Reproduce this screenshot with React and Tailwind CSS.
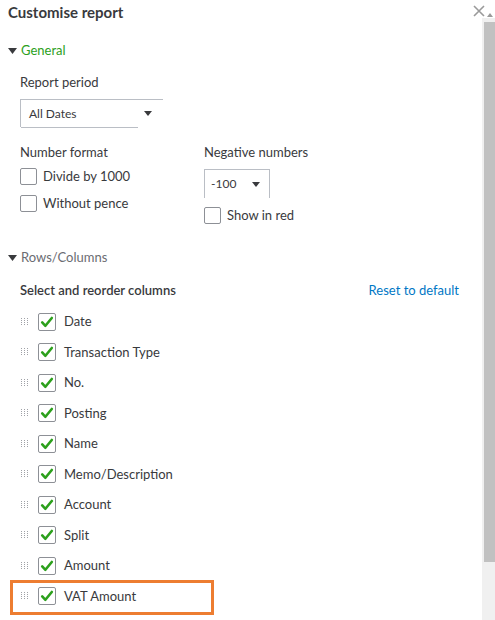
import React from "react";

const Caret = ({ className = "" }) => (
  <svg width="9" height="6" viewBox="0 0 9 6" className={className}>
    <path d="M0 0 L9 0 L4.5 6 Z" fill="#393a3d" />
  </svg>
);

const SmallCaret = () => (
  <svg width="8" height="5" viewBox="0 0 8 5">
    <path d="M0 0 L8 0 L4 5 Z" fill="#393a3d" />
  </svg>
);

const Box = () => (
  <span className="w-[17px] h-[17px] border border-[#8d9096] rounded-[2px] bg-white shrink-0" />
);

const CheckedBox = () => (
  <span className="w-[18px] h-[18px] border border-[#8d9096] rounded-[2px] bg-white shrink-0 flex items-center justify-center">
    <svg width="14" height="14" viewBox="0 0 14 14">
      <path d="M2.2 7.4 L5.4 10.8 L11.8 3" stroke="#2ca01c" strokeWidth="2.6" fill="none" strokeLinecap="round" strokeLinejoin="round" />
    </svg>
  </span>
);

const Grip = () => (
  <svg width="8" height="8" viewBox="0 0 8 8" className="shrink-0">
    {[0, 3, 6].map((x) =>
      [0, 2, 4, 6].map((y) => (
        <rect key={`${x}-${y}`} x={x} y={y} width="1" height="1" fill="#9fa1a6" />
      ))
    )}
  </svg>
);

const columns = [
  "Date",
  "Transaction Type",
  "No.",
  "Posting",
  "Name",
  "Memo/Description",
  "Account",
  "Split",
  "Amount",
  "VAT Amount",
];

function App() {
  return (
    <div
      className="w-[495px] h-[620px] bg-white relative overflow-hidden flex text-[#393a3d]"
      style={{ fontFamily: "Lato, 'Open Sans', sans-serif" }}
    >
      {/* Main panel */}
      <div className="flex-1 flex flex-col">
        <h1 className="ml-[8px] mt-[2px] h-5 leading-5 text-[15px] font-bold text-[#393a3d]">
          Customise report
        </h1>

        {/* General section */}
        <div className="mt-[19px] flex items-center h-5 pl-[8px]">
          <Caret />
          <span className="ml-[4px] text-[13px] text-[#2ca01c]">General</span>
        </div>

        <div className="ml-[20px] mt-[11px] h-5 leading-5 text-[13px]">Report period</div>
        <div className="ml-[20px] mt-[7px] relative w-[143px] h-[28px] border-l border-t border-[#babec5]">
          <div className="absolute left-0 -bottom-px w-[117px] border-b border-[#babec5]" />
          <div className="flex items-center h-full pl-[8px] pr-[11px] justify-between">
            <span className="text-[12px]">All Dates</span>
            <SmallCaret />
          </div>
        </div>

        <div className="ml-[20px] mt-[15px] flex">
          <div className="w-[184px] flex flex-col">
            <div className="h-5 leading-5 text-[13px]">Number format</div>
            <div className="mt-[5px] flex items-center gap-[6px]">
              <Box />
              <span className="text-[13px] text-[#393a3d]">Divide by 1000</span>
            </div>
            <div className="mt-[7px] flex items-center gap-[6px]">
              <Box />
              <span className="text-[13px]">Without pence</span>
            </div>
          </div>
          <div className="flex flex-col">
            <div className="h-5 leading-5 text-[13px]">Negative numbers</div>
            <div className="mt-[7px] w-[66px] h-[29px] border border-[#babec5] border-b-0 flex items-center justify-between pl-[6px] pr-[9px]">
              <span className="text-[12px]">-100</span>
              <SmallCaret />
            </div>
            <div className="mt-[8px] flex items-center gap-[6px]">
              <Box />
              <span className="text-[13px]">Show in red</span>
            </div>
          </div>
        </div>

        {/* Rows/Columns section */}
        <div className="mt-[22px] flex items-center h-5 pl-[8px]">
          <Caret />
          <span className="ml-[4px] text-[13px] text-[#6b6c72]">Rows/Columns</span>
        </div>

        <div className="ml-[20px] mr-[23px] mt-[13px] h-5 flex items-center justify-between">
          <span className="text-[13px] font-semibold">Select and reorder columns</span>
          <span className="text-[13px] text-[#0077c5]">Reset to default</span>
        </div>

        <div className="mt-[6px] flex flex-col">
          {columns.map((c, i) => (
            <div key={c} className="relative h-[30.5px] flex items-center pl-[21px]">
              {i === columns.length - 1 && (
                <span className="absolute left-[10px] top-[-1px] w-[204px] h-[35px] border-[3px] border-[#ed7d31]" />
              )}
              <Grip />
              <span className="ml-[9px]">
                <CheckedBox />
              </span>
              <span className="ml-[8px] text-[13px]">{c}</span>
            </div>
          ))}
        </div>
      </div>

      {/* Scrollbar */}
      <div className="w-[13px] flex flex-col">
        <div className="h-[18px]" />
        <div className="flex-1 bg-[#f0f0f0] pl-[2px] flex flex-col">
          <div className="h-[4px]" />
          <div className="h-[540px] bg-[#c1c1c1]" />
        </div>
      </div>

      {/* Close button and scroll arrow */}
      <svg width="12" height="12" viewBox="0 0 12 12" className="absolute left-[473px] top-[5px]">
        <path d="M1 1 L11 11 M11 1 L1 11" stroke="#9a9a9a" strokeWidth="1.6" />
      </svg>
      <svg width="6" height="4" viewBox="0 0 6 4" className="absolute left-[487px] top-[13px]">
        <path d="M0 4 L6 4 L3 0 Z" fill="#9a9a9a" />
      </svg>
    </div>
  );
}

export default App;
